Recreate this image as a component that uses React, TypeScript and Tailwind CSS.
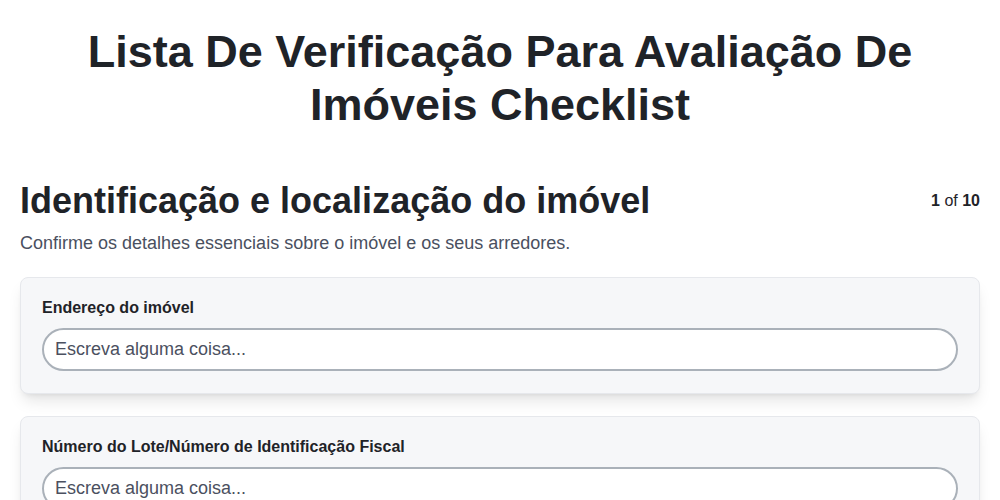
import { useState } from 'react'

const fields = [
  'Endereço do imóvel',
  'Número do Lote/Número de Identificação Fiscal',
  'Tipo de imóvel',
]

function Field({ label }: { label: string }) {
  const [value, setValue] = useState('')
  return (
    <div className="bg-[#f6f7f9] border border-[#e6e8ec] rounded-lg shadow-lg px-[21px] pt-[20px] pb-[22px]">
      <label className="block text-[16px] leading-[20px] font-bold text-[#1f2328] mb-[10px]">{label}</label>
      <input
        value={value}
        onChange={(e) => setValue(e.target.value)}
        placeholder="Escreva alguma coisa..."
        className="w-full h-[43px] rounded-full border-2 border-[#aab1b9] bg-white px-[11px] text-[18px] text-[#1f2328] placeholder:text-[#4b5060] outline-none"
      />
    </div>
  )
}

export default function App() {
  return (
    <div className="min-h-screen bg-white font-['Liberation_Sans',Arial,sans-serif] text-[#1f2328]">
      <h1 className="pt-[25px] text-center text-[45px] leading-[53px] font-bold px-16">
        Lista De Verificação Para Avaliação De Imóveis Checklist
      </h1>

      <div className="px-5 mt-[48px]">
        <div className="flex items-start justify-between">
          <h2 className="text-[36px] leading-[44px] font-bold">Identificação e localização do imóvel</h2>
          <div className="text-[16px] mt-[10px] text-[#1f2328]">
            <span className="font-bold">1</span> of <span className="font-bold">10</span>
          </div>
        </div>
        <p className="mt-[8px] text-[18px] leading-[24px] text-[#4a5060]">
          Confirme os detalhes essenciais sobre o imóvel e os seus arredores.
        </p>

        <div className="mt-[22px] flex flex-col gap-[22px] pb-10">
          {fields.map((f) => (
            <Field key={f} label={f} />
          ))}
        </div>
      </div>
    </div>
  )
}
